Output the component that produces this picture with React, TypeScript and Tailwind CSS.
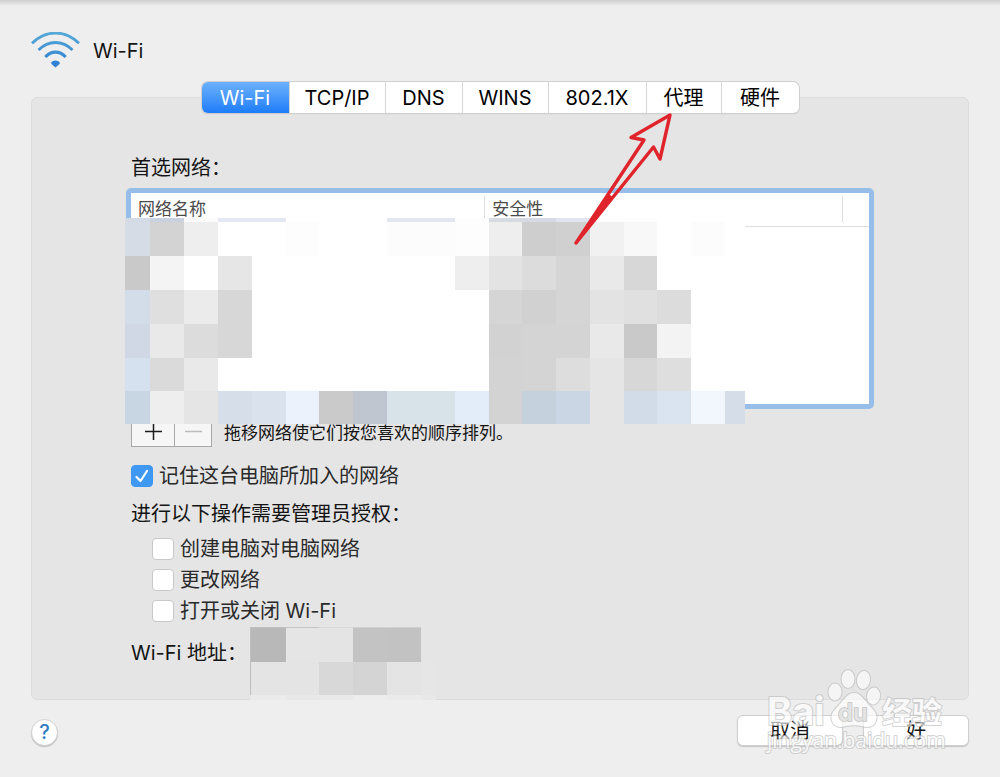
import React, { useState } from "react";

const tabs = [
  { name: "Wi-Fi", width: "w-[88px]" },
  { name: "TCP/IP", width: "w-[96px]" },
  { name: "DNS", width: "w-[77px]" },
  { name: "WINS", width: "w-[86px]" },
  { name: "802.1X", width: "w-[98px]" },
  { name: "代理", width: "w-[75px]" },
  { name: "硬件", width: "w-[77px]" },
];

const permissions = [
  { id: "create", label: "创建电脑对电脑网络" },
  { id: "change", label: "更改网络" },
  { id: "toggle", label: "打开或关闭 Wi-Fi" },
];

// left edges of the blocks that hide the network list, last one is the end
const listCols = [0, 25, 59, 93, 127, 161, 194, 228, 262, 296, 330, 364, 397, 431, 465, 499, 532, 566, 600, 620];
const listRows = [0, 4, 38, 72, 106, 140, 173, 206];
const listColors = [
  "d3dbe7 c9d0df fbfbfb e3e9f2 e3e9f2 fff fff fff e0e7ef e0e7ef fdfdfd d6dbe2 d5dae4 e0e4ee fdfdfd fdfdfd fff fff fff",
  "d6dce6 d3d3d3 eeeeee fff fff fdfdfd fff fff fcfcfc fcfcfc fdfdfd eeeeee cecece d0d0d0 f1f1f1 f8f8f8 fff fcfcfc fff",
  "c9c9c9 f4f4f4 fff e6e6e6 fff fff fff fff fff fff eeeeee e3e3e3 dcdcdc d5d5d5 e9e9e9 d7d7d7 fff fff fff",
  "d3dce9 dfdfdf ebebeb d7d7d7 fff fff fff fff fff fff fff d5d5d5 d1d1d1 d5d5d5 e3e3e3 e0e0e0 dcdcdc fff fff",
  "cfd8e4 e9e9e9 dcdcdc d7d7d7 fff fff fff fff fff fff fff d2d2d2 d4d4d4 d4d4d4 e9e9e9 c9c9c9 f3f3f3 fff fff",
  "d5e1ee dadada e9e9e9 fff fff fff fff fff fff fff fff d3d3d3 d4d4d4 dddddd e5e5e5 d7d7d7 dedede fff fff",
  "c8d5e3 eeeeee e5e5e5 d5dee9 dae2ee ebf2fb cacaca c0c6cf d8e2e9 d8e2e9 e2edf9 d3d3d3 c5d1dc cbd6e4 e5e5e5 d1dce8 dae4f0 f1f7fd d5dee8",
];

const addressCols = [0, 1, 36, 69, 103, 137, 171, 186];
const addressRows = [0, 1, 35, 68, 73];
const addressColors = [
  "c0c0c0 c0c0c0 c4c4c4 d8d8d8 d0d0d0 d0d0d0 e5e5e5",
  "c0c0c0 b8b8b8 e5e5e5 e4e4e4 c3c3c3 c2c2c2 e5e5e5",
  "bebebe e4e4e4 e4e4e4 d8d8d8 d4d4d4 e4e4e4 e6e6e6",
  "e6e6e6 ebebeb e8e8e8 e9e9e9 ededed ebebeb e8e8e8",
];

type MosaicProps = {
  cols: number[];
  rows: number[];
  colors: string[];
  className: string;
};

const Mosaic: React.FC<MosaicProps> = ({ cols, rows, colors, className }) => {
  const width = cols[cols.length - 1];
  const height = rows[rows.length - 1];

  return (
    <svg
      width={width}
      height={height}
      viewBox={`0 0 ${width} ${height}`}
      shapeRendering="crispEdges"
      className={className}
      aria-hidden="true"
    >
      {colors.map((line, r) =>
        line.split(" ").map((color, c) => (
          <rect
            key={`${r}-${c}`}
            x={cols[c]}
            y={rows[r]}
            width={cols[c + 1] - cols[c]}
            height={rows[r + 1] - rows[r]}
            fill={`#${color}`}
          />
        ))
      )}
    </svg>
  );
};

const WifiIcon = () => (
  <svg width="50" height="36" viewBox="0 0 50 36" fill="none" aria-hidden="true">
    <defs>
      <linearGradient id="wifi" x1="0" y1="0" x2="0" y2="36" gradientUnits="userSpaceOnUse">
        <stop offset="0" stopColor="#56a9d6" />
        <stop offset="1" stopColor="#2b7cd0" />
      </linearGradient>
    </defs>
    <g stroke="url(#wifi)" strokeWidth="2.8">
      <path d="M1 11.3C14.5-2.4 34.5-2.4 48 11.3" />
      <path d="M7.5 18C17.5 8 31.5 8 41.5 18" />
      <path d="M14.3 25C20.5 18.6 28.5 18.6 34.7 25" strokeWidth="3.2" />
    </g>
    <path
      d="M20 30.7C22.5 27.8 26.5 27.8 29 30.7C28.8 32.4 26.4 33.6 24.5 35.6C22.6 33.6 20.2 32.4 20 30.7Z"
      fill="#2f83d2"
    />
  </svg>
);

const Arrow = () => (
  <svg
    width="100"
    height="134"
    viewBox="0 0 100 134"
    className="pointer-events-none absolute top-[30px] left-[372px]"
    aria-hidden="true"
  >
    <path
      d="M4 131L72 28L59 25.5L98 3L88 47L81.5 35Z"
      fill="none"
      stroke="#df242c"
      strokeWidth="3.4"
      strokeLinejoin="round"
    />
    <path d="M4 131L36 83L40 86Z" fill="#df242c" stroke="#df242c" strokeWidth="2.4" strokeLinejoin="round" />
  </svg>
);

const Watermark = () => (
  <svg
    width="190"
    height="96"
    viewBox="0 0 190 96"
    className="pointer-events-none absolute right-[17px] -bottom-[13px]"
    aria-hidden="true"
  >
    <g fill="#ffffff" stroke="#bcbcbc" strokeWidth="2" opacity="0.65" paintOrder="stroke" strokeLinejoin="round">
      <ellipse cx="73" cy="29" rx="6.5" ry="8.5" />
      <ellipse cx="86" cy="16" rx="6.5" ry="9" />
      <ellipse cx="101.5" cy="17" rx="6.5" ry="9" transform="rotate(8 101.5 17)" />
      <ellipse cx="111.5" cy="33" rx="6.5" ry="8.5" transform="rotate(8 111.5 33)" />
      <path d="M92 30C99 30 102 37 107 42C113 48 116 52 114 58C112 64 106 65 100 63C95 62 89 62 84 63C78 65 72 64 70 58C68 52 71 48 77 42C82 37 85 30 92 30Z" />
      <text x="5" y="62" className="font-['Inter',sans-serif] text-[38px] font-bold">
        Bai
      </text>
      <text x="120" y="60" className="font-['Noto_Sans_CJK_SC',sans-serif] text-[30px] font-bold">
        经验
      </text>
      <text x="5" y="85" className="font-['Open_Sans',sans-serif] text-[21px]">
        jingyan.baidu.com
      </text>
    </g>
    <text
      x="76"
      y="58"
      fill="#e4e4e4"
      stroke="#c2c2c2"
      strokeWidth="1.6"
      paintOrder="stroke"
      className="font-['Inter',sans-serif] text-[24px] font-semibold"
    >
      du
    </text>
  </svg>
);

const App: React.FC = () => {
  const [activeTab, setActiveTab] = useState("Wi-Fi");
  const [remember, setRemember] = useState(true);
  const [allowed, setAllowed] = useState<string[]>([]);

  const togglePermission = (id: string) => {
    setAllowed((prev) => (prev.includes(id) ? prev.filter((p) => p !== id) : [...prev, id]));
  };

  return (
    <div className="min-h-screen bg-[#eeeeee] font-['Inter','Noto_Sans_CJK_SC',sans-serif] text-[20px] leading-7 text-[#141414]">
      <div className="h-[6px] bg-linear-to-b from-[#cfcfcf] to-[#eeeeee]" />
      <div className="px-[31px]">
        <header className="flex h-[76px] items-start gap-3 pt-[26px]">
          <WifiIcon />
          <h1 className="pt-[5px]">Wi-Fi</h1>
        </header>

        <div className="relative z-10 flex justify-center">
          <div role="tablist" className="flex h-[31px] rounded-[6px] bg-white shadow-[0_0_0_1px_#d0d0d0,0_1px_1px_#a8a8a8]">
            {tabs.map((tab) => (
              <button
                key={tab.name}
                type="button"
                role="tab"
                aria-selected={activeTab === tab.name}
                onClick={() => setActiveTab(tab.name)}
                className={`${tab.width} border-r border-[#d6d6d6] first:rounded-l-[6px] last:rounded-r-[6px] last:border-r-0 ${
                  activeTab === tab.name ? "bg-linear-to-b from-[#6bb1f9] to-[#1b7cf9] text-white" : "text-black"
                }`}
              >
                {tab.name}
              </button>
            ))}
          </div>
          <div className="absolute top-0 left-1/2 -ml-[300px]">
            <Arrow />
          </div>
        </div>

        <main className="-mt-4 rounded-[6px] border border-[#dcdcdc] bg-[#e5e5e5] px-[94px] pt-14 pb-8">
          <h2 className="ml-[5px]">首选网络：</h2>

          <div className="relative mt-[6px]">
            <div className="h-[221px] rounded-[5px] border-[5px] border-[#97bee8] bg-white">
              <table className="w-full table-fixed text-left text-[17px] text-[#4a4a4a]">
                <thead>
                  <tr className="border-b border-[#dedede]">
                    <th scope="col" className="w-[48%] pt-[3px] pb-1 font-normal">
                      <div className="h-[26px] border-r border-[#dedede] pl-[7px] leading-[26px]">网络名称</div>
                    </th>
                    <th scope="col" className="pt-[3px] pb-1 font-normal">
                      <div className="h-[26px] border-r border-[#dedede] pl-[7px] leading-[26px]">安全性</div>
                    </th>
                    <td className="w-[26px]" />
                  </tr>
                </thead>
              </table>
            </div>
            <Mosaic
              cols={listCols}
              rows={listRows}
              colors={listColors}
              className="absolute top-[30px] -left-px"
            />
          </div>

          <div className="mt-[9px] ml-[5px] flex h-[29px] items-center gap-3">
            <div className="flex h-full border border-[#a9a9a9] bg-[#f6f6f6]">
              <button type="button" aria-label="添加" className="flex w-[43px] items-center justify-center border-r border-[#a9a9a9]">
                <svg width="17" height="17" viewBox="0 0 17 17" stroke="#1c1c1c" strokeWidth="1.5" aria-hidden="true">
                  <path d="M0 7.5H17M8.5 0V16" />
                </svg>
              </button>
              <button type="button" aria-label="移除" className="flex w-[36px] items-center justify-center">
                <svg width="17" height="17" viewBox="0 0 17 17" stroke="#bcbcbc" strokeWidth="1.5" aria-hidden="true">
                  <path d="M0 7.5H17" />
                </svg>
              </button>
            </div>
            <p className="text-[17px]">拖移网络使它们按您喜欢的顺序排列。</p>
          </div>

          <label className="mt-[15px] ml-[5px] flex w-fit items-center gap-[6px] text-[#2a2a2a]">
            <span className="relative flex">
              <input
                type="checkbox"
                checked={remember}
                onChange={(e) => setRemember(e.target.checked)}
                className="peer h-[22px] w-[22px] appearance-none rounded-[4px] border border-[#cccccc] bg-white checked:border-[#3d96f0] checked:bg-[#3f99f3]"
              />
              <svg
                viewBox="0 0 22 22"
                className="pointer-events-none absolute inset-0 hidden peer-checked:block"
                fill="none"
                stroke="#ffffff"
                strokeWidth="2.2"
                strokeLinecap="round"
                strokeLinejoin="round"
                aria-hidden="true"
              >
                <path d="M5.5 12L9.5 16L16 6" />
              </svg>
            </span>
            记住这台电脑所加入的网络
          </label>

          <fieldset className="mt-[10px] ml-[5px]">
            <legend>进行以下操作需要管理员授权：</legend>
            <div className="mt-[5px] ml-[21px]">
              {permissions.map((p) => (
                <label key={p.id} className="flex h-[31px] w-fit items-center gap-[6px] text-[#2a2a2a]">
                  <input
                    type="checkbox"
                    checked={allowed.includes(p.id)}
                    onChange={() => togglePermission(p.id)}
                    className="h-[22px] w-[22px] appearance-none rounded-[4px] border border-[#c8c8c8] bg-white checked:bg-[#3f99f3]"
                  />
                  {p.label}
                </label>
              ))}
            </div>
          </fieldset>

          <div className="relative mt-[13px] ml-[5px]">
            <p>Wi-Fi 地址：</p>
            <Mosaic
              cols={addressCols}
              rows={addressRows}
              colors={addressColors}
              className="absolute -top-3 left-[119px]"
            />
          </div>
        </main>

        <footer className="relative mt-[15px] flex items-center justify-between">
          <button
            type="button"
            aria-label="帮助"
            className="mt-1 h-[27px] w-[27px] rounded-full border border-[#d2d2d2] bg-white leading-[25px] font-medium text-[#2f7cc4] shadow-[0_1px_1px_#bdbdbd]"
          >
            ?
          </button>
          <div className="flex gap-5">
            <button type="button" className="h-[31px] w-[106px] rounded-[6px] border border-[#cfcfcf] bg-white shadow-[0_1px_1px_#c4c4c4]">
              取消
            </button>
            <button type="button" className="h-[31px] w-[106px] rounded-[6px] border border-[#cfcfcf] bg-white shadow-[0_1px_1px_#c4c4c4]">
              好
            </button>
          </div>
          <Watermark />
        </footer>
      </div>
    </div>
  );
};

export default App;
